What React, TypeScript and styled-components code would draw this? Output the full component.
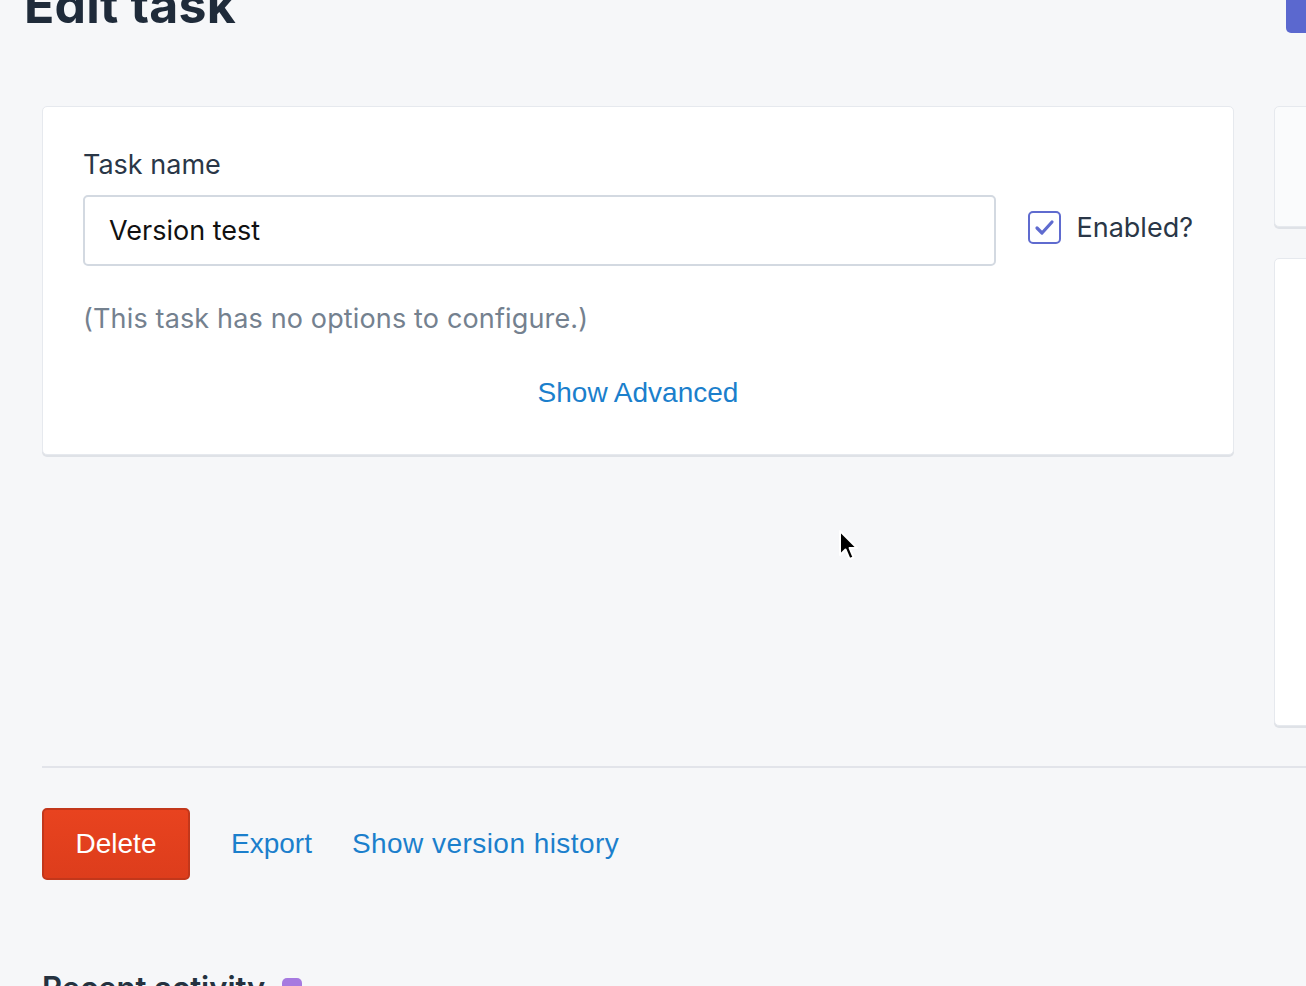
import React from "react";
import styled, { createGlobalStyle } from "styled-components";

const Global = createGlobalStyle`
  html, body { margin: 0; padding: 0; }
  body {
    background: #f6f7f9;
    font-family: Inter, "Noto Sans", sans-serif;
    color: #253240;
    overflow: hidden;
  }
`;

const Page = styled.div`
  position: relative;
  width: 1306px;
  height: 986px;
  overflow: hidden;
`;

const Header = styled.div`
  display: flex;
  justify-content: space-between;
  align-items: flex-start;
  height: 140px;
  margin-top: -34px;
`;

const Title = styled.h1`
  margin: 6px 0 0 24px;
  font-size: 50px;
  line-height: 66px;
  font-weight: 700;
  color: #1f2b3a;
  letter-spacing: 0.2px;
`;

const TopButton = styled.div`
  width: 60px;
  height: 67px;
  margin-right: -40px;
  background: #5b68cf;
  border-radius: 5px;
`;

const Columns = styled.div`
  display: flex;
  gap: 40px;
  padding-left: 42px;
  align-items: flex-start;
`;

const Main = styled.div`
  width: 1192px;
  flex-shrink: 0;
`;

const Side = styled.div`
  display: flex;
  flex-direction: column;
  gap: 31px;
  width: 300px;
  flex-shrink: 0;
`;

const Card = styled.div<{ $h?: number; $tint?: boolean }>`
  box-sizing: border-box;
  background: ${(p) => (p.$tint ? "#fafbfc" : "#ffffff")};
  border: 1px solid #e6e9ee;
  border-radius: 5px;
  box-shadow: 0 2px 0 #dfe2e7;
  ${(p) => (p.$h ? `height: ${p.$h}px;` : "")}
`;

const FormCard = styled(Card)`
  padding: 40px 40px 46px 40px;
  height: 349px;
`;

const Label = styled.div`
  font-size: 27px;
  line-height: 34px;
  color: #2a3747;
  margin-bottom: 13px;
  margin-top: 1px;
`;

const Row = styled.div`
  display: flex;
  align-items: center;
  gap: 32px;
`;

const Input = styled.div`
  box-sizing: border-box;
  flex: 1;
  height: 71px;
  border: 2px solid #d3d9e1;
  border-radius: 5px;
  padding: 0 24px;
  display: flex;
  align-items: center;
  font-size: 27px;
  color: #111;
  background: #fff;
`;

const CheckLabel = styled.label`
  display: flex;
  align-items: center;
  gap: 16px;
  font-size: 27px;
  color: #2a3747;
  margin-top: -6px;
`;

const Box = styled.span`
  box-sizing: border-box;
  width: 33px;
  height: 33px;
  border: 2px solid #5f6bcf;
  border-radius: 5px;
  display: flex;
  align-items: center;
  justify-content: center;
`;

const Note = styled.div`
  margin-top: 36px;
  font-size: 27px;
  line-height: 34px;
  color: #74818f;
  letter-spacing: 0.15px;
`;

const LinkText = styled.a<{ $spacing?: number }>`
  font-family: "Liberation Sans", Arial, sans-serif;
  font-size: 28px;
  color: #1b7fcc;
  text-decoration: none;
  cursor: pointer;
  letter-spacing: ${(p) => p.$spacing ?? 0}px;
`;

const Centered = styled.div`
  margin-top: 40px;
  text-align: center;
  line-height: 34px;
`;

const Divider = styled.hr`
  border: none;
  height: 2px;
  background: #e2e4ea;
  margin: 0 0 0 42px;
`;

const Spacer = styled.div<{ $h: number }>`
  height: ${(p) => p.$h}px;
`;

const Actions = styled.div`
  display: flex;
  align-items: center;
  gap: 41px;
  padding-left: 42px;
  margin-top: 40px;
`;

const DeleteButton = styled.button`
  box-sizing: border-box;
  width: 148px;
  height: 72px;
  background: linear-gradient(#e8431f, #dd3d1c);
  border: 2px solid #c2371b;
  border-radius: 5px;
  color: #fff;
  font-family: "Liberation Sans", Arial, sans-serif;
  font-size: 28px;
  padding: 0;
`;

const Links = styled.div`
  display: flex;
  gap: 40px;
`;

const Recent = styled.h2`
  display: flex;
  align-items: flex-start;
  gap: 17px;
  margin: 88px 0 0 42px;
  font-size: 31px;
  line-height: 40px;
  font-weight: 600;
  color: #253240;
`;

const Badge = styled.span`
  width: 20px;
  height: 20px;
  border-radius: 5px;
  background: #a67ae0;
  margin-top: 10px;
`;

const Cursor = styled.svg`
  position: absolute;
  left: 836px;
  top: 528px;
`;

export default function App() {
  return (
    <Page>
      <Global />
      <Header>
        <Title>Edit task</Title>
        <TopButton />
      </Header>
      <Columns>
        <Main>
          <FormCard>
            <Label>Task name</Label>
            <Row>
              <Input>Version test</Input>
              <CheckLabel>
                <Box>
                  <svg width="21" height="17" viewBox="0 0 21 17">
                    <path d="M3 9 L8 14 L18 3" fill="none" stroke="#5f6bcf" strokeWidth="3.2" strokeLinecap="round" strokeLinejoin="round" />
                  </svg>
                </Box>
                Enabled?
              </CheckLabel>
            </Row>
            <Note>(This task has no options to configure.)</Note>
            <Centered>
              <LinkText>Show Advanced</LinkText>
            </Centered>
          </FormCard>
        </Main>
        <Side>
          <Card $h={121} $tint />
          <Card $h={468} />
        </Side>
      </Columns>
      <Spacer $h={40} />
      <Divider />
      <Actions>
        <DeleteButton>Delete</DeleteButton>
        <Links>
          <LinkText>Export</LinkText>
          <LinkText $spacing={0.45}>Show version history</LinkText>
        </Links>
      </Actions>
      <Recent>
        Recent activity <Badge />
      </Recent>
      <Cursor width="26" height="36" viewBox="0 0 26 36">
        <path d="M4 3 L4 27 L9.5 21.5 L13.5 31 L17.5 29.3 L13.6 20 L21 20 Z" fill="#000" stroke="#fff" strokeWidth="2" strokeLinejoin="round" />
      </Cursor>
    </Page>
  );
}
